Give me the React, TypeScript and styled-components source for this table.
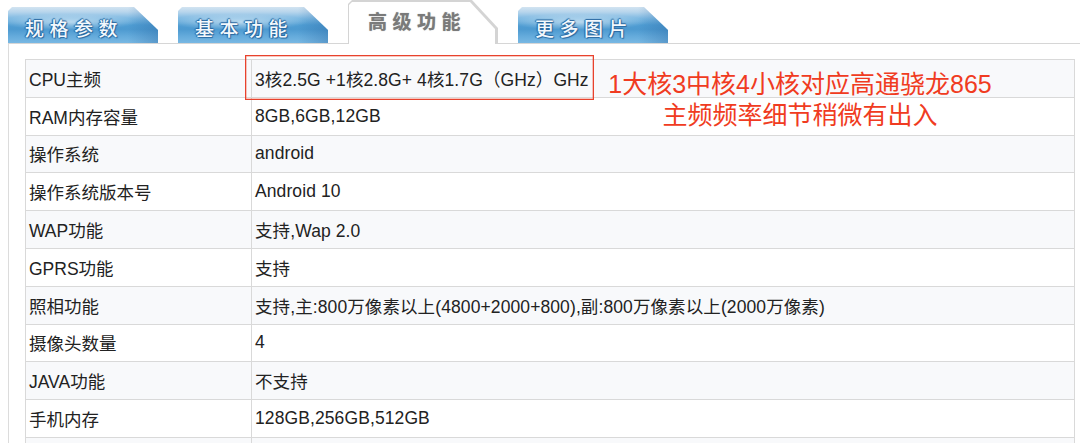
import React from "react";
import styled, { createGlobalStyle, css } from "styled-components";

const GlobalStyle = createGlobalStyle`
  html, body {
    margin: 0;
    padding: 0;
    background: #ffffff;
  }
  body {
    font-family: "Liberation Sans", "Noto Sans CJK SC", sans-serif;
  }
`;

const Page = styled.div`
  width: 1080px;
  height: 443px;
  overflow: hidden;
  padding-left: 8px;
  box-sizing: border-box;
`;

const TabBar = styled.div`
  display: flex;
  align-items: flex-end;
  gap: 20px;
  height: 44px;
  box-sizing: border-box;
  border-bottom: 1px solid #d6d6d6;
`;

const Tab = styled.div<{ $active?: boolean }>`
  position: relative;
  width: 150px;
  box-sizing: border-box;
  display: flex;
  align-items: center;
  font-family: "Noto Sans CJK SC", sans-serif;
  font-size: 19px;
  letter-spacing: 5.5px;
  ${(p) =>
    p.$active
      ? css`
          height: 44px;
          margin-bottom: -1px;
          padding: 0 0 4px 20px;
          background: #d4d4d4;
          color: #7a7a7a;
          font-weight: 700;
          text-shadow: 0 0 1px rgba(90, 90, 90, 0.6);
          clip-path: polygon(0 100%, 0 4px, 4px 0, 124px 0, 150px 28px, 150px 100%);
          &::after {
            content: "";
            position: absolute;
            left: 1px;
            top: 2px;
            right: 3px;
            bottom: 0;
            background: #ffffff;
            clip-path: polygon(0 100%, 0 3px, 3px 0, 121px 0, 146px 27px, 146px 100%);
          }
        `
      : css`
          height: 36px;
          padding: 4px 0 0 17px;
          color: #f2f8fd;
          font-weight: 500;
          text-shadow: 0 0 1px #1e5d94, 1px 1px 1px #2a6aa3, -1px 0 1px #2a6aa3, 0 -1px 1px #2a6aa3;
          clip-path: polygon(0 100%, 0 4px, 4px 0, 126px 0, 150px 23px, 150px 100%);
          background:
            radial-gradient(ellipse 70px 8px at 60px 15px, rgba(255, 255, 255, 0.55), rgba(255, 255, 255, 0) 100%),
            linear-gradient(
              to bottom,
              #d3e4f1 0%,
              #b7d5ec 14%,
              #7db9e2 32%,
              #4f9dd3 50%,
              #4d9ad0 62%,
              #63aadb 80%,
              #78b8e3 100%
            );
          &::after {
            content: "";
            position: absolute;
            right: 0;
            top: 0;
            bottom: 0;
            width: 30px;
            background: linear-gradient(to right, rgba(40, 100, 160, 0) 0%, rgba(40, 100, 160, 0.35) 100%);
          }
        `}
`;

const TabLabel = styled.span`
  position: relative;
  z-index: 1;
`;

const Body = styled.div`
  border-left: 1px solid #dcdcdc;
  padding: 15px 0 0 16px;
  height: 420px;
  box-sizing: border-box;
`;

const SpecTable = styled.div`
  position: relative;
  width: 1050px;
  box-sizing: border-box;
  border: 1px solid #d9d9d9;
  border-bottom: none;
`;

const Row = styled.div<{ $alt: boolean }>`
  display: grid;
  grid-template-columns: 226px 1fr;
  height: 37.8px;
  box-sizing: border-box;
  border-bottom: 1px solid #d9d9d9;
  background: ${(p) => (p.$alt ? "#f8f9fb" : "#ffffff")};
`;

const Cell = styled.div<{ $label?: boolean }>`
  display: flex;
  align-items: center;
  padding: 0 3px;
  font-size: 17.5px;
  color: #222222;
  white-space: nowrap;
  ${(p) => (p.$label ? "border-right: 1px solid #d9d9d9;" : "letter-spacing: 0.1px;")}
`;

const Highlight = styled.div`
  position: absolute;
  z-index: 2;
  left: 219px;
  top: -5px;
  width: 349px;
  height: 45px;
  box-sizing: border-box;
  border: 1px solid #e8422d;
  box-shadow: inset 0 0 0 0.5px rgba(232, 66, 45, 0.6);
  pointer-events: none;
`;

const Annotation = styled.div`
  position: absolute;
  z-index: 2;
  left: 574px;
  top: 9px;
  width: 400px;
  text-align: center;
  font-size: 25px;
  line-height: 31px;
  color: #f03b21;
  white-space: nowrap;
`;

const tabs = [
  { label: "规格参数", active: false },
  { label: "基本功能", active: false },
  { label: "高级功能", active: true },
  { label: "更多图片", active: false },
];

const rows: [string, string][] = [
  ["CPU主频", "3核2.5G +1核2.8G+ 4核1.7G（GHz）GHz"],
  ["RAM内存容量", "8GB,6GB,12GB"],
  ["操作系统", "android"],
  ["操作系统版本号", "Android 10"],
  ["WAP功能", "支持,Wap 2.0"],
  ["GPRS功能", "支持"],
  ["照相功能", "支持,主:800万像素以上(4800+2000+800),副:800万像素以上(2000万像素)"],
  ["摄像头数量", "4"],
  ["JAVA功能", "不支持"],
  ["手机内存", "128GB,256GB,512GB"],
  ["", ""],
];

export default function App() {
  return (
    <>
      <GlobalStyle />
      <Page>
        <TabBar>
          {tabs.map((t) => (
            <Tab key={t.label} $active={t.active}>
              <TabLabel>{t.label}</TabLabel>
            </Tab>
          ))}
        </TabBar>
        <Body>
          <SpecTable>
            {rows.map(([k, v], i) => (
              <Row key={i} $alt={i % 2 === 0}>
                <Cell $label>{k}</Cell>
                <Cell>{v}</Cell>
              </Row>
            ))}
            <Highlight />
            <Annotation>
              1大核3中核4小核对应高通骁龙865
              <br />
              主频频率细节稍微有出入
            </Annotation>
          </SpecTable>
        </Body>
      </Page>
    </>
  );
}
